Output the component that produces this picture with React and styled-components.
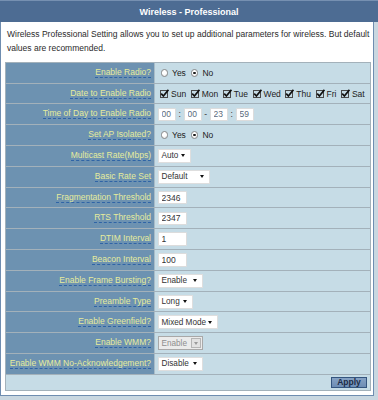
import React from 'react';
import styled, { createGlobalStyle } from 'styled-components';

const GlobalStyle = createGlobalStyle`
  html, body {
    margin: 0;
    padding: 0;
    background: #c9d7e0;
  }
  body {
    font-family: "Liberation Sans", Arial, sans-serif;
    font-size: 8.5px;
    color: #333;
  }
`;

const Page = styled.div`
  width: 378px;
`;

const Header = styled.div`
  height: 22px;
  box-sizing: border-box;
  border-top: 1px solid #7690b1;
  background: #4d6c93;
  color: #fff;
  font-weight: bold;
  font-size: 9px;
  line-height: 22px;
  text-align: center;
`;

const Body = styled.div`
  width: 374px;
  box-sizing: border-box;
  background: #fff;
  border: 1px solid #6f8db0;
  border-top: none;
  padding: 4.6px 1px 4px 4px;
`;

const Intro = styled.p`
  margin: 0;
  padding: 0 1px 0 2px;
  line-height: 14.5px;
  color: #2b2b2b;
`;

const Table = styled.div`
  margin-top: 6.3px;
  width: 366px;
  box-sizing: border-box;
  border: 1px solid #a3b1ba;
  border-top: none;
`;

const Row = styled.div`
  display: flex;
  height: 20.8px;
  box-sizing: border-box;
  border-top: 1px solid #a3b1ba;
`;

const LabelCell = styled.div`
  width: 148px;
  flex: none;
  background: #6d92b1;
  display: flex;
  align-items: center;
  justify-content: flex-end;
  padding-right: 3px;
  box-sizing: border-box;
`;

const Label = styled.span`
  color: #e6ec9c;
  line-height: 1;
  padding-bottom: 0.5px;
  border-bottom: 1px dashed #2f64a6;
  white-space: nowrap;
`;

const ValueCell = styled.div`
  flex: 1;
  background: #c6dce6;
  border-left: 1px solid #a9bcc8;
  display: flex;
  align-items: center;
  padding-left: 2.5px;
  white-space: nowrap;
`;

const ApplyRow = styled.div`
  height: 16.5px;
  box-sizing: border-box;
  border-top: 1px solid #a3b1ba;
  background: #c6dce6;
  display: flex;
  align-items: center;
  justify-content: flex-end;
  padding-right: 3px;
`;

const ApplyButton = styled.button`
  width: 36px;
  height: 11px;
  padding: 0;
  box-sizing: border-box;
  border: 1px solid #34557f;
  background: linear-gradient(#86a2c4, #6d8db5);
  color: #1c2b45;
  font-family: inherit;
  font-weight: bold;
  font-size: 8.5px;
  line-height: 9px;
`;

const Option = styled.label`
  display: inline-flex;
  align-items: center;
  margin-left: ${p => p.$first ? '3px' : '5px'};
  color: #222;
`;

const Radio = styled.span`
  width: 7.5px;
  height: 7.5px;
  box-sizing: border-box;
  border-radius: 50%;
  border: 1px solid #8a8a8a;
  background: radial-gradient(circle at 40% 35%, #fff 40%, #dedede);
  margin-right: 4px;
  display: inline-flex;
  align-items: center;
  justify-content: center;
  &::after {
    content: '';
    width: 2.5px;
    height: 2.5px;
    border-radius: 50%;
    background: ${p => p.$checked ? '#1a1a1a' : 'transparent'};
  }
`;

const Check = styled.svg`
  width: 9px;
  height: 9px;
  margin-right: 2px;
  flex: none;
`;

const Day = styled.label`
  display: inline-flex;
  align-items: center;
  margin-left: ${p => p.$first ? '2.5px' : '4.5px'};
  color: #222;
`;

const Field = styled.input`
  width: ${p => p.$w}px;
  height: 13.5px;
  box-sizing: border-box;
  border: 1px solid #dcdcdc;
  border-radius: 1px;
  background: #fff;
  padding: 0 0 0 3px;
  margin: 0;
  font-family: inherit;
  font-size: 8.5px;
  color: ${p => p.$muted ? '#5a6b7c' : '#333'};
  outline: none;
`;

const Sep = styled.span`
  width: 7.5px;
  text-align: center;
  color: #333;
`;

const Select = styled.div`
  width: ${p => p.$w}px;
  height: 14px;
  box-sizing: border-box;
  border: 1px solid ${p => p.$disabled ? '#a8a8a8' : '#dedede'};
  background: ${p => p.$disabled ? '#ebebeb' : '#fff'};
  color: ${p => p.$disabled ? '#8e8e8e' : '#333'};
  font-size: 8.2px;
  display: flex;
  align-items: center;
  justify-content: space-between;
  padding: 0 ${p => p.$disabled ? '1px' : '5px'} 0 3px;
`;

const Caret = styled.span`
  width: 0;
  height: 0;
  border-left: 2.5px solid transparent;
  border-right: 2.5px solid transparent;
  border-top: 3px solid #111;
`;

const CaretBox = styled.span`
  width: 10px;
  height: 10px;
  box-sizing: border-box;
  border: 1px solid #b5b5b5;
  background: #e2e2e2;
  display: flex;
  align-items: center;
  justify-content: center;
  & > span {
    border-top-color: #9a9a9a;
  }
`;

const days = ['Sun', 'Mon', 'Tue', 'Wed', 'Thu', 'Fri', 'Sat'];

const rows = [
  { label: 'Enable Radio?', type: 'radio', value: 'No' },
  { label: 'Date to Enable Radio', type: 'days' },
  { label: 'Time of Day to Enable Radio', type: 'time' },
  { label: 'Set AP Isolated?', type: 'radio', value: 'No' },
  { label: 'Multicast Rate(Mbps)', type: 'select', value: 'Auto', width: 33 },
  { label: 'Basic Rate Set', type: 'select', value: 'Default', width: 52 },
  { label: 'Fragmentation Threshold', type: 'input', value: '2346' },
  { label: 'RTS Threshold', type: 'input', value: '2347' },
  { label: 'DTIM Interval', type: 'input', value: '1' },
  { label: 'Beacon Interval', type: 'input', value: '100' },
  { label: 'Enable Frame Bursting?', type: 'select', value: 'Enable', width: 45 },
  { label: 'Preamble Type', type: 'select', value: 'Long', width: 35 },
  { label: 'Enable Greenfield?', type: 'select', value: 'Mixed Mode', width: 60 },
  { label: 'Enable WMM?', type: 'select', value: 'Enable', width: 45, disabled: true },
  { label: 'Enable WMM No-Acknowledgement?', type: 'select', value: 'Disable', width: 45 },
];

function CheckIcon() {
  return (
    <Check viewBox="0 0 9 9">
      <rect x="0.5" y="1.5" width="7" height="7" fill="none" stroke="#4a4a4a" strokeWidth="1" />
      <path d="M1.2 4.6 L3.4 7 L8.4 0.8" fill="none" stroke="#111" strokeWidth="1.7" />
    </Check>
  );
}

function renderValue(row) {
  switch (row.type) {
    case 'radio':
      return (
        <>
          <Option $first><Radio $checked={row.value === 'Yes'} />Yes</Option>
          <Option><Radio $checked={row.value === 'No'} />No</Option>
        </>
      );
    case 'days':
      return days.map((d, i) => (
        <Day key={d} $first={i === 0}><CheckIcon />{d}</Day>
      ));
    case 'time':
      return (
        <>
          <Field $w={18.5} $muted defaultValue="00" />
          <Sep>:</Sep>
          <Field $w={18.5} $muted defaultValue="00" />
          <Sep>-</Sep>
          <Field $w={18.5} $muted defaultValue="23" />
          <Sep>:</Sep>
          <Field $w={18.5} $muted defaultValue="59" />
        </>
      );
    case 'input':
      return <Field $w={29.5} defaultValue={row.value} />;
    default:
      return (
        <Select $w={row.width} $disabled={row.disabled}>
          {row.value}
          {row.disabled ? <CaretBox><Caret /></CaretBox> : <Caret />}
        </Select>
      );
  }
}

export default function App() {
  return (
    <Page>
      <GlobalStyle />
      <Header>Wireless - Professional</Header>
      <Body>
        <Intro>
          Wireless Professional Setting allows you to set up additional parameters for wireless. But default values are recommended.
        </Intro>
        <Table>
          {rows.map(row => (
            <Row key={row.label}>
              <LabelCell><Label>{row.label}</Label></LabelCell>
              <ValueCell>{renderValue(row)}</ValueCell>
            </Row>
          ))}
          <ApplyRow>
            <ApplyButton>Apply</ApplyButton>
          </ApplyRow>
        </Table>
      </Body>
    </Page>
  );
}
